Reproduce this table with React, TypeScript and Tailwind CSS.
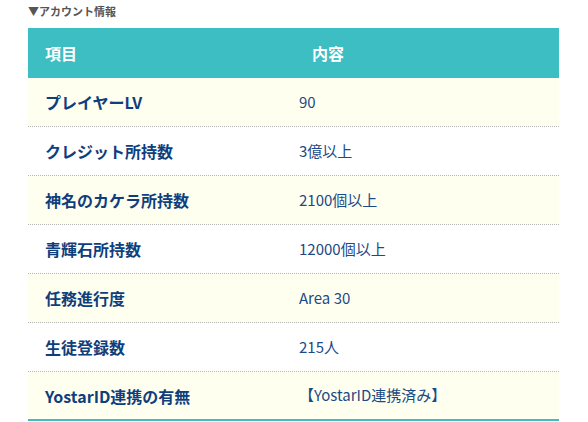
const rows = [
  { label: "プレイヤーLV", value: "90" },
  { label: "クレジット所持数", value: "3億以上" },
  { label: "神名のカケラ所持数", value: "2100個以上" },
  { label: "青輝石所持数", value: "12000個以上" },
  { label: "任務進行度", value: "Area 30" },
  { label: "生徒登録数", value: "215人" },
  { label: "YostarID連携の有無", value: "【YostarID連携済み】" },
];

export default function App() {
  return (
    <div
      className="w-[588px] h-[422px] overflow-hidden bg-white"
      style={{ fontFamily: "'Noto Sans CJK JP', 'Noto Sans', sans-serif" }}
    >
      <div className="pl-[28px] pt-[2px] h-[28px] text-[11px] font-bold text-[#555555] leading-[18px]">
        ▼アカウント情報
      </div>
      <div className="ml-[28px] w-[531px]">
        <div className="flex h-[50px] items-center bg-[#3dbec3] text-white text-[16px] font-bold">
          <div className="w-[255px] pl-[17px]">項目</div>
          <div className="flex-1 pl-[29px]">内容</div>
        </div>
        {rows.map((row, i) => (
          <div
            key={row.label}
            className={
              i === rows.length - 1
                ? "flex h-[49px] items-center bg-[#fffff0] border-b-2 border-[#3dbec3]"
                : i % 2 === 0
                  ? "flex h-[49px] items-center bg-[#fffff0] border-b border-dotted border-[#b5b5b5]"
                  : "flex h-[49px] items-center bg-white border-b border-dotted border-[#b5b5b5]"
            }
          >
            <div className="w-[255px] pl-[17px] text-[16px] font-bold text-[#0f3e7c]">
              {row.label}
            </div>
            <div className="flex-1 pl-[16px] text-[15px] text-[#1b4a86]">{row.value}</div>
          </div>
        ))}
      </div>
    </div>
  );
}
